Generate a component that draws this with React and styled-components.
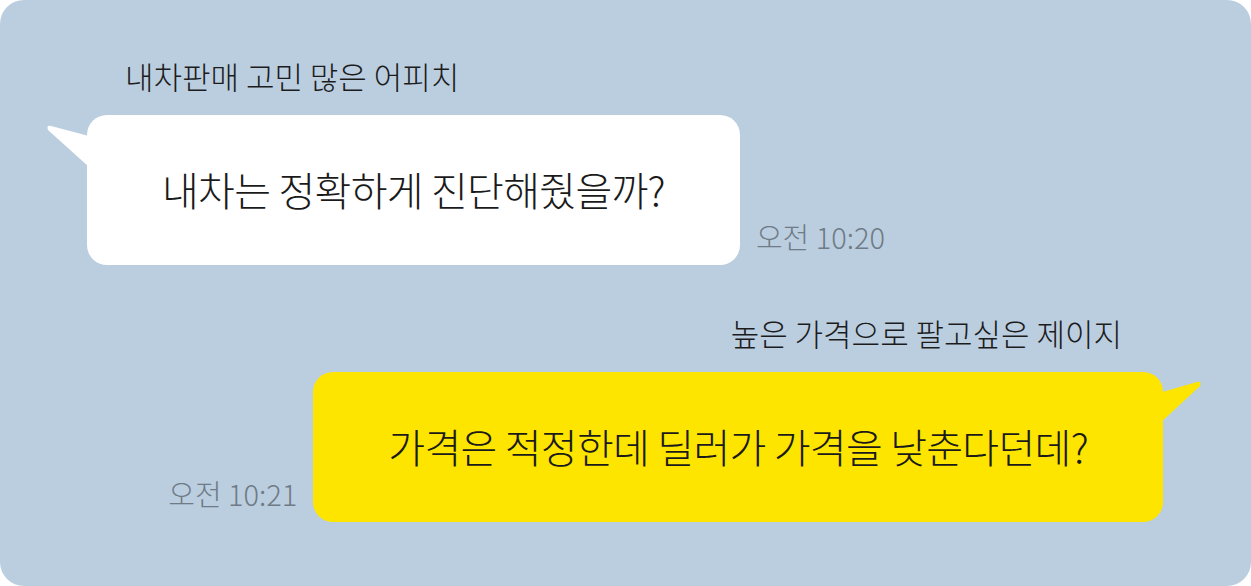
import React from 'react';
import styled, { createGlobalStyle } from 'styled-components';

const GlobalStyle = createGlobalStyle`
  html, body {
    margin: 0;
    padding: 0;
    background: #ffffff;
  }
  body {
    font-family: "Noto Sans CJK KR", "Noto Sans", sans-serif;
  }
`;

const Panel = styled.div`
  width: 1251px;
  height: 586px;
  box-sizing: border-box;
  background: #bbcee0;
  border-radius: 24px;
  padding-top: 56px;
  display: flex;
  flex-direction: column;
  gap: 48px;
`;

const Message = styled.div`
  display: flex;
  flex-direction: column;
  align-items: ${p => (p.mine ? 'flex-end' : 'flex-start')};
  padding: ${p => (p.mine ? '0 88px 0 0' : '0 0 0 87px')};
`;

const Name = styled.div`
  font-size: 31px;
  font-weight: 300;
  line-height: 40px;
  color: #1c1c1c;
  padding: ${p => (p.mine ? '0 41px 0 0' : '0 0 0 38px')};
  margin-bottom: 19px;
`;

const Row = styled.div`
  display: flex;
  flex-direction: ${p => (p.mine ? 'row-reverse' : 'row')};
  align-items: flex-end;
  gap: 16px;
`;

const Bubble = styled.div`
  position: relative;
  height: 150px;
  box-sizing: border-box;
  padding: 0 75px 2px;
  display: flex;
  align-items: center;
  border-radius: 20px;
  background: ${p => (p.mine ? '#fee500' : '#ffffff')};
  font-size: 40px;
  font-weight: 300;
  letter-spacing: -0.7px;
  color: #1a1a1a;
  white-space: nowrap;
`;

const Tail = styled.svg`
  position: absolute;
  top: 8px;
  ${p => (p.mine ? 'right: -40px;' : 'left: -42px;')}
  width: 44px;
  height: 62px;
`;

const Time = styled.div`
  font-size: 29px;
  font-weight: 300;
  line-height: 34px;
  color: #6f7b86;
  margin-bottom: 12px;
`;

const TailShape = ({ mine, color }) => (
  <Tail mine={mine} viewBox="0 0 44 62">
    {mine ? (
      <path d="M0 13 L38 2 Q43 1 41 6 L0 44 Z" fill={color} />
    ) : (
      <path d="M44 13 L6 3 Q1 2 3 7 L44 44 Z" fill={color} />
    )}
  </Tail>
);

const ChatMessage = ({ name, text, time, mine }) => (
  <Message mine={mine}>
    <Name mine={mine}>{name}</Name>
    <Row mine={mine}>
      <Bubble mine={mine}>
        <TailShape mine={mine} color={mine ? '#fee500' : '#ffffff'} />
        {text}
      </Bubble>
      <Time>{time}</Time>
    </Row>
  </Message>
);

export default function App() {
  return (
    <>
      <GlobalStyle />
      <Panel>
        <ChatMessage
          name="내차판매 고민 많은 어피치"
          text="내차는 정확하게 진단해줬을까?"
          time="오전 10:20"
        />
        <ChatMessage
          mine
          name="높은 가격으로 팔고싶은 제이지"
          text="가격은 적정한데 딜러가 가격을 낮춘다던데?"
          time="오전 10:21"
        />
      </Panel>
    </>
  );
}
